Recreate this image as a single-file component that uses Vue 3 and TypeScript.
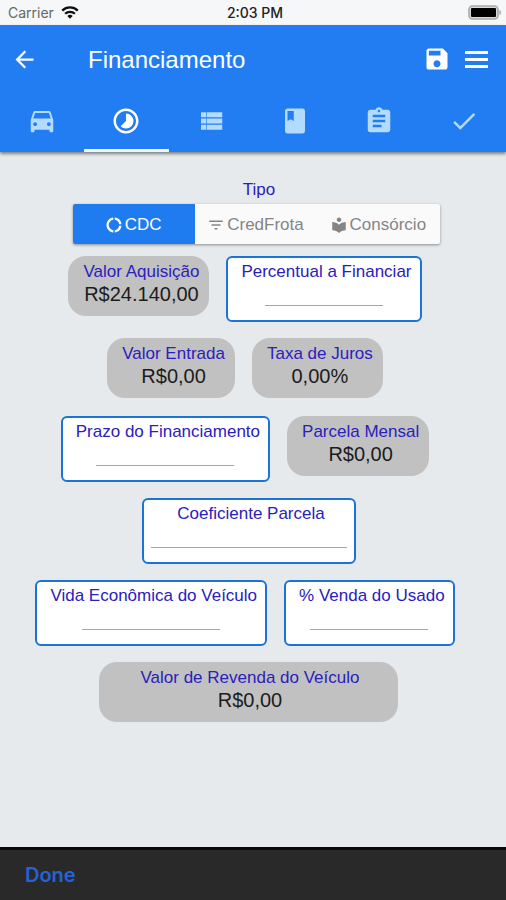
<script setup lang="ts">
import { reactive, ref } from 'vue'

interface Tab {
  name: string
  path: string
}

interface Option {
  name: string
  path: string
}

interface Field {
  id: string
  label: string
  value?: string
  size?: 'short' | 'medium' | 'long'
  wide?: boolean
}

const tabs: Tab[] = [
  {
    name: 'Veículo',
    path: 'M18.92 5.01C18.72 4.42 18.16 4 17.5 4h-11c-.66 0-1.21.42-1.42 1.01L3 11v9c0 .55.45 1 1 1h1c.55 0 1-.45 1-1v-1h12v1c0 .55.45 1 1 1h1c.55 0 1-.45 1-1v-9l-2.08-5.99zM6.5 16c-.83 0-1.5-.67-1.5-1.5S5.67 13 6.5 13s1.5.67 1.5 1.5S7.33 16 6.5 16zm11 0c-.83 0-1.5-.67-1.5-1.5s.67-1.5 1.5-1.5 1.5.67 1.5 1.5-.67 1.5-1.5 1.5zM5 10l1.5-4.5h11L19 10H5z',
  },
  {
    name: 'Financiamento',
    path: 'M16.24 7.76C15.07 6.59 13.54 6 12 6v6l-4.24 4.24c2.34 2.34 6.14 2.34 8.49 0 2.34-2.34 2.34-6.14-.01-8.48zM12 2C6.48 2 2 6.48 2 12s4.48 10 10 10 10-4.48 10-10S17.52 2 12 2zm0 18c-4.42 0-8-3.58-8-8s3.58-8 8-8 8 3.58 8 8-3.58 8-8 8z',
  },
  {
    name: 'Lista',
    path: 'M4 14h4v-4H4v4zm0 5h4v-4H4v4zM4 9h4V5H4v4zm4.500 5h12.500v-4H8.500v4zm0 5h12.500v-4H8.500v4zM8.500 5v4H21V5H8.500z',
  },
  {
    name: 'Livro',
    path: 'M18 2H6c-1.1 0-2 .9-2 2v16c0 1.1.9 2 2 2h12c1.1 0 2-.9 2-2V4c0-1.1-.9-2-2-2zM6 4h5v8l-2.5-1.5L6 12V4z',
  },
  {
    name: 'Relatório',
    path: 'M19 3h-4.18C14.4 1.84 13.3 1 12 1c-1.3 0-2.4.84-2.82 2H5c-1.1 0-2 .9-2 2v14c0 1.1.9 2 2 2h14c1.1 0 2-.9 2-2V5c0-1.1-.9-2-2-2zm-7 0c.55 0 1 .45 1 1s-.45 1-1 1-1-.45-1-1 .45-1 1-1zm2 14H7v-2h7v2zm3-4H7v-2h10v2zm0-4H7V7h10v2z',
  },
  {
    name: 'Concluir',
    path: 'M9 16.2L4.8 12l-1.4 1.4L9 19 21 7l-1.4-1.4L9 16.2z',
  },
]

const options: Option[] = [
  {
    name: 'CDC',
    path: 'M11 5.08V2c-5 .5-9 4.81-9 10s4 9.5 9 10v-3.08c-3-.48-6-3.4-6-6.92s3-6.44 6-6.92zM18.97 11H22c-.47-5-4-8.53-9-9v3.08C16 5.51 18.54 8 18.97 11zM13 18.92V22c5-.47 8.53-4 9-9h-3.03c-.43 3-2.97 5.49-5.97 5.92z',
  },
  {
    name: 'CredFrota',
    path: 'M10 18h4v-2h-4v2zM3 6v2h18V6H3zm3 7h12v-2H6v2z',
  },
  {
    name: 'Consórcio',
    path: 'M12 11.55C9.64 9.35 6.48 8 3 8v11c3.48 0 6.64 1.35 9 3.55 2.36-2.19 5.52-3.55 9-3.55V8c-3.48 0-6.64 1.35-9 3.55zM12 8c1.66 0 3-1.34 3-3s-1.34-3-3-3-3 1.34-3 3 1.34 3 3 3z',
  },
]

const rows: Field[][] = [
  [
    { id: 'aquisicao', label: 'Valor Aquisição', value: 'R$24.140,00' },
    { id: 'percentual', label: 'Percentual a Financiar', size: 'short' },
  ],
  [
    { id: 'entrada', label: 'Valor Entrada', value: 'R$0,00' },
    { id: 'juros', label: 'Taxa de Juros', value: '0,00%' },
  ],
  [
    { id: 'prazo', label: 'Prazo do Financiamento', size: 'medium' },
    { id: 'parcela', label: 'Parcela Mensal', value: 'R$0,00' },
  ],
  [{ id: 'coeficiente', label: 'Coeficiente Parcela', size: 'long' }],
  [
    { id: 'vida', label: 'Vida Econômica do Veículo', size: 'medium' },
    { id: 'usado', label: '% Venda do Usado', size: 'short' },
  ],
  [{ id: 'revenda', label: 'Valor de Revenda do Veículo', value: 'R$0,00', wide: true }],
]

const activeTab = ref(1)
const selected = ref('CDC')
const entries = reactive<Record<string, string>>({})
</script>

<template>
  <div class="screen">
    <div class="status">
      <span class="carrier">
        Carrier
        <svg width="18" height="13" viewBox="0 0 18 13" aria-hidden="true">
          <g fill="none" stroke="#111" stroke-width="2.3">
            <path d="M1.2 4.6a11.2 11.2 0 0 1 15.6 0" />
            <path d="M4.1 7.8a7 7 0 0 1 9.8 0" />
          </g>
          <path fill="#111" d="M6.3 10a4 4 0 0 1 5.4 0L9 12.8z" />
        </svg>
      </span>
      <span class="time">2:03 PM</span>
      <span class="battery">
        <svg width="34" height="15" viewBox="0 0 34 15" aria-hidden="true">
          <rect x="1" y="1" width="29" height="13" rx="3.5" fill="#d8d8d8" stroke="#a9a9a9" stroke-width="1.6" />
          <rect x="3" y="3" width="25" height="9" rx="1" fill="#000" />
          <path d="M31.2 5v5c1.6-.5 2-1.5 2-2.5s-.4-2-2-2.5z" fill="#b5b5b5" />
        </svg>
      </span>
    </div>

    <header class="appbar">
      <div class="toolbar">
        <button class="icon-button" type="button" aria-label="Voltar">
          <svg width="27" height="27" viewBox="0 0 24 24"><path d="M20 11H7.83l5.59-5.59L12 4l-8 8 8 8 1.41-1.41L7.83 13H20v-2z" /></svg>
        </button>
        <h1>Financiamento</h1>
        <button class="icon-button" type="button" aria-label="Salvar">
          <svg width="28" height="28" viewBox="0 0 24 24"><path d="M17 3H5c-1.11 0-2 .9-2 2v14c0 1.1.89 2 2 2h14c1.1 0 2-.9 2-2V7l-4-4zm-5 16c-1.66 0-3-1.34-3-3s1.34-3 3-3 3 1.34 3 3-1.34 3-3 3zm3-10H5V5h10v4z" /></svg>
        </button>
        <button class="icon-button" type="button" aria-label="Menu">
          <svg width="23" height="17" viewBox="0 0 23 17"><path d="M0 0h23v3H0zM0 7h23v3H0zM0 14h23v3H0z" /></svg>
        </button>
      </div>
      <nav class="tabs">
        <button
          v-for="(tab, i) in tabs"
          :key="tab.name"
          type="button"
          class="tab"
          :class="{ active: i === activeTab }"
          :aria-label="tab.name"
          @click="activeTab = i"
        >
          <svg width="30" height="30" viewBox="0 0 24 24"><path :d="tab.path" /></svg>
        </button>
      </nav>
    </header>

    <main>
      <div class="type">
        <span id="tipo" class="caption">Tipo</span>
        <div class="segments" role="group" aria-labelledby="tipo">
          <button
            v-for="option in options"
            :key="option.name"
            type="button"
            class="segment"
            :class="{ chosen: option.name === selected }"
            :aria-pressed="option.name === selected"
            @click="selected = option.name"
          >
            <svg width="18" height="18" viewBox="0 0 24 24" aria-hidden="true"><path :d="option.path" /></svg>
            <span>{{ option.name }}</span>
          </button>
        </div>
      </div>

      <form @submit.prevent>
        <div v-for="(row, i) in rows" :key="i" class="row" :class="{ pair: row.length > 1 }">
          <template v-for="field in row" :key="field.id">
            <div v-if="field.value" class="readout" :class="{ wide: field.wide }">
              <span class="caption">{{ field.label }}</span>
              <output class="value">{{ field.value }}</output>
            </div>
            <div v-else class="entry">
              <label class="caption" :for="field.id">{{ field.label }}</label>
              <input :id="field.id" v-model="entries[field.id]" type="text" inputmode="decimal" :class="field.size" />
            </div>
          </template>
        </div>
      </form>
    </main>

    <footer>
      <button type="button" class="done">Done</button>
    </footer>
  </div>
</template>

<style>
body {
  margin: 0;
}
</style>

<style scoped>
.screen {
  display: flex;
  flex-direction: column;
  min-height: 100vh;
  background: #e6eaed;
  font-family: "Liberation Sans", Arial, sans-serif;
}

button {
  margin: 0;
  padding: 0;
  border: 0;
  background: none;
  font: inherit;
  cursor: pointer;
}

svg {
  display: block;
  flex: none;
  fill: currentColor;
}

.status {
  display: grid;
  grid-template-columns: 1fr auto 1fr;
  align-items: center;
  height: 25px;
  padding: 0 4px 0 8px;
  background: #f5f7f8;
  font-family: Inter, "Liberation Sans", sans-serif;
  font-size: 14px;
}

.carrier {
  display: flex;
  align-items: center;
  gap: 7px;
  color: #666;
}

.time {
  color: #222;
  font-weight: 500;
}

.battery {
  justify-self: end;
}

.appbar {
  position: relative;
  background: #227df2;
  box-shadow: 0 2px 3px rgba(0, 0, 0, 0.45);
  color: #fff;
}

.toolbar {
  display: flex;
  align-items: center;
  gap: 14px;
  height: 68px;
  padding: 0 18px 0 11px;
}

.icon-button {
  color: #fff;
}

h1 {
  flex: 1;
  margin: 0;
  padding: 2px 0 0 36px;
  font-size: 24px;
  font-weight: 400;
  line-height: 28px;
}

.tabs {
  display: grid;
  grid-template-columns: repeat(6, 1fr);
  height: 59px;
}

.tab {
  display: flex;
  align-items: center;
  justify-content: center;
  border-bottom: 3px solid transparent;
  color: #b3daff;
}

.tab.active {
  border-bottom-color: #f3f7fb;
  color: #fff;
}

main {
  flex: 1;
  padding: 28px 9px 24px 0;
}

.type {
  display: flex;
  flex-direction: column;
  align-items: center;
  gap: 4px;
  padding-left: 16px;
}

.caption {
  color: #2a20bd;
  font-size: 17px;
  line-height: 20px;
  white-space: nowrap;
}

.type .caption {
  padding-left: 5px;
}

.segments {
  display: grid;
  grid-template-columns: repeat(3, 1fr);
  width: 367px;
  max-width: 100%;
  height: 40px;
  background: #fafafa;
  border-radius: 2px;
  box-shadow: 0 1px 3px rgba(0, 0, 0, 0.4);
}

.segment {
  display: flex;
  align-items: center;
  justify-content: center;
  gap: 2px;
  padding: 1px 2px 0 0;
  color: #858585;
  font-size: 17px;
}

.segment.chosen {
  border-radius: 2px 0 0 2px;
  background: #1f7bf0;
  color: #fff;
}

form {
  display: flex;
  flex-direction: column;
  gap: 16px;
  padding-top: 12px;
}

.row {
  display: flex;
  flex-wrap: wrap;
  align-items: flex-start;
  justify-content: center;
  gap: 17px;
}

.row.pair {
  padding-right: 7px;
}

.readout,
.entry {
  display: flex;
  flex-direction: column;
  align-items: center;
  box-sizing: border-box;
}

.readout {
  height: 60px;
  margin-bottom: 2px;
  padding: 6px 10px 0 15px;
  border-radius: 18px;
  background: #c1c1c1;
}

.readout.wide {
  padding-right: 39px;
  padding-left: 42px;
}

.value {
  color: #1c1c1c;
  font-size: 20px;
  line-height: 24px;
}

.entry {
  height: 66px;
  padding: 4px 7px 0;
  border: 2px solid #1b73d8;
  border-radius: 6px;
  background: #fff;
}

.entry .caption {
  padding: 0 1px 0 6px;
}

input {
  box-sizing: border-box;
  height: 24px;
  padding: 0;
  border: 0;
  border-bottom: 1px solid #a6a6a6;
  border-radius: 0;
  outline: 0;
  background: transparent;
  color: #1c1c1c;
  font: inherit;
  font-size: 17px;
  text-align: center;
}

.short {
  width: 118px;
}

.medium {
  width: 138px;
}

.long {
  width: 196px;
}

footer {
  display: flex;
  align-items: center;
  height: 50px;
  padding: 0 25px;
  border-top: 3px solid #0a0a0a;
  background: #292929;
}

.done {
  color: #2563d4;
  font-family: Inter, "Liberation Sans", sans-serif;
  font-size: 20px;
  font-weight: 600;
}
</style>
